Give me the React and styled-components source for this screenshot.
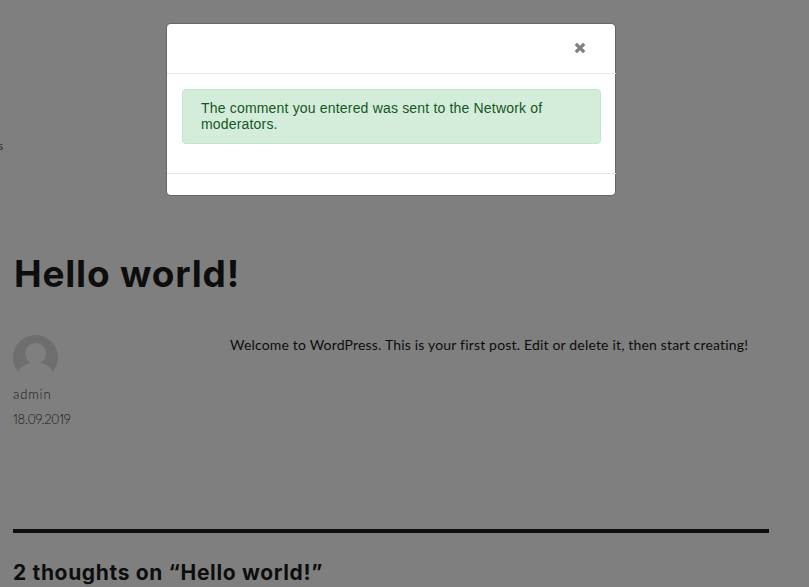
import React from 'react'
import styled, { createGlobalStyle } from 'styled-components'

const Global = createGlobalStyle`
  html, body {
    margin: 0;
    padding: 0;
    height: 100%;
    overflow: hidden;
    background: #fff;
  }
`

const Page = styled.div`
  position: relative;
  width: 809px;
  height: 587px;
  overflow: hidden;
  color: #1a1a1a;
  font-family: 'Lato', sans-serif;
`

const Clipped = styled.div`
  height: 150px;
  padding-top: 138px;
  box-sizing: border-box;
  margin-left: -2px;
  font-size: 12px;
  line-height: 16px;
  color: #555;
  overflow: hidden;
`

const Post = styled.main`
  width: 756px;
  margin-left: 13px;
`

const Title = styled.h1`
  margin: 102px 0 0 1px;
  font: 700 37px/44px 'Inter', sans-serif;
  letter-spacing: 0.8px;
  color: #1a1a1a;
`

const Body = styled.div`
  display: flex;
  margin-top: 39px;
  height: 194px;
`

const Meta = styled.aside`
  width: 217px;
  font-size: 13px;
  font-weight: 300;
  color: #333;
`

const Avatar = styled.svg`
  display: block;
  width: 45px;
  height: 45px;
  margin-bottom: 4px;
`

const MetaLine = styled.div`
  height: 24.5px;
  line-height: 20px;
  letter-spacing: ${p => (p.$tight ? '-0.3px' : '0.9px')};
  font-variant-numeric: proportional-nums;
`

const Content = styled.p`
  margin: 0;
  font-size: 14px;
  line-height: 20px;
  letter-spacing: 0.18px;
  color: #1a1a1a;
`

const Rule = styled.hr`
  margin: 0;
  border: 0;
  height: 4px;
  background: #1a1a1a;
`

const Thoughts = styled.h2`
  margin: 27px 0 0;
  font: 700 21px/26px 'Inter', sans-serif;
  letter-spacing: 0.65px;
  color: #1a1a1a;
`

const Backdrop = styled.div`
  position: absolute;
  inset: 0;
  background: rgba(0, 0, 0, 0.5);
`

const Dialog = styled.div`
  position: absolute;
  top: 24px;
  left: 167px;
  width: 448px;
  height: 171px;
  background: #fff;
  border-radius: 4px;
  box-shadow: 0 0 0 1px rgba(0, 0, 0, 0.2);
  font-family: 'Liberation Sans', Arial, sans-serif;
`

const Header = styled.div`
  height: 49px;
  width: 449px;
  display: flex;
  align-items: center;
  justify-content: flex-end;
  border-bottom: 1px solid #e5e5e5;
`

const Close = styled.button`
  border: 0;
  padding: 0;
  margin: 0 30px 1px 0;
  background: none;
  display: block;
  width: 12px;
  height: 12px;
`

const DialogBody = styled.div`
  height: 100px;
  width: 449px;
  box-sizing: border-box;
  padding: 15px;
  border-bottom: 1px solid #e5e5e5;
`

const Alert = styled.div`
  box-sizing: border-box;
  height: 55px;
  padding: 10px 18px;
  background: #d4edda;
  border: 1px solid #c3e6cb;
  border-radius: 4px;
  color: #155724;
  font-size: 14px;
  line-height: 16px;
  letter-spacing: 0.18px;
`

export default function App() {
  return (
    <Page>
      <Global />
      <Clipped>s</Clipped>
      <Post>
        <Title>Hello world!</Title>
        <Body>
          <Meta>
            <Avatar viewBox="0 0 45 45">
              <defs>
                <clipPath id="round">
                  <circle cx="22.5" cy="22.5" r="22.5" />
                </clipPath>
              </defs>
              <g clipPath="url(#round)">
                <rect width="45" height="45" fill="#dcdcdc" />
                <circle cx="22.5" cy="18.5" r="10.5" fill="#fff" />
                <ellipse cx="22.5" cy="43" rx="19" ry="16" fill="#fff" />
              </g>
            </Avatar>
            <MetaLine>admin</MetaLine>
            <MetaLine $tight>18.09.2019</MetaLine>
          </Meta>
          <Content>
            Welcome to WordPress. This is your first post. Edit or delete it, then start creating!
          </Content>
        </Body>
        <Rule />
        <Thoughts>2 thoughts on “Hello world!”</Thoughts>
      </Post>
      <Backdrop />
      <Dialog>
        <Header>
          <Close aria-label="Close">
            <svg width="12" height="12" viewBox="0 0 12 12">
              <path d="M1.8 1.8l8.4 8.4M10.2 1.8l-8.4 8.4" stroke="#7f7f7f" strokeWidth="3.2" fill="none" />
            </svg>
          </Close>
        </Header>
        <DialogBody>
          <Alert>The comment you entered was sent to the Network of moderators.</Alert>
        </DialogBody>
      </Dialog>
    </Page>
  )
}
